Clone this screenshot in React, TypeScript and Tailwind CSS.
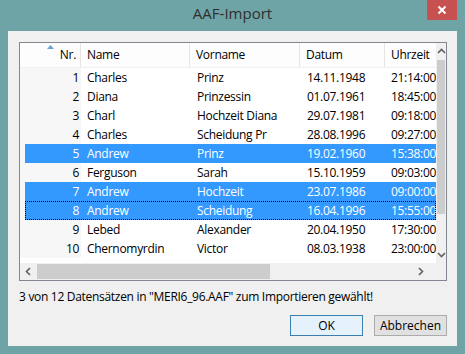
import React from "react";

type Row = { nr: number; name: string; vorname: string; datum: string; zeit: string; sel?: boolean; focus?: boolean };

const rows: Row[] = [
  { nr: 1, name: "Charles", vorname: "Prinz", datum: "14.11.1948", zeit: "21:14:00" },
  { nr: 2, name: "Diana", vorname: "Prinzessin", datum: "01.07.1961", zeit: "18:45:00" },
  { nr: 3, name: "Charl", vorname: "Hochzeit Diana", datum: "29.07.1981", zeit: "09:18:00" },
  { nr: 4, name: "Charles", vorname: "Scheidung Pr", datum: "28.08.1996", zeit: "09:27:00" },
  { nr: 5, name: "Andrew", vorname: "Prinz", datum: "19.02.1960", zeit: "15:38:00", sel: true },
  { nr: 6, name: "Ferguson", vorname: "Sarah", datum: "15.10.1959", zeit: "09:03:00" },
  { nr: 7, name: "Andrew", vorname: "Hochzeit", datum: "23.07.1986", zeit: "09:00:00", sel: true },
  { nr: 8, name: "Andrew", vorname: "Scheidung", datum: "16.04.1996", zeit: "15:55:00", sel: true, focus: true },
  { nr: 9, name: "Lebed", vorname: "Alexander", datum: "20.04.1950", zeit: "17:30:00" },
  { nr: 10, name: "Chernomyrdin", vorname: "Victor", datum: "08.03.1938", zeit: "23:00:00" },
];

const Chevron = ({ dir }: { dir: "up" | "down" | "left" | "right" }) => {
  const d = {
    up: "M1 6 L4.5 2.5 L8 6",
    down: "M1 3 L4.5 6.5 L8 3",
    left: "M6 1 L2.5 4.5 L6 8",
    right: "M3 1 L6.5 4.5 L3 8",
  }[dir];
  return (
    <svg width="9" height="9" viewBox="0 0 9 9">
      <path d={d} fill="none" stroke="#606060" strokeWidth="1.6" />
    </svg>
  );
};

export default function App() {
  return (
    <div
      className="w-[465px] h-[354px] bg-[#6fa4a7] flex flex-col overflow-hidden text-[12px] text-black"
      style={{ fontFamily: '"Open Sans", "Noto Sans", sans-serif' }}
    >
      {/* title bar */}
      <div className="h-[31px] flex items-start relative shrink-0">
        <div className="flex-1 text-center text-[15px] text-[#2e2e2e] pt-[2px]">AAF-Import</div>
        <div className="absolute right-[8px] top-0 w-[30px] h-[20px] bg-[#c75050] flex items-center justify-center">
          <svg width="10" height="10" viewBox="0 0 10 10">
            <path d="M1.5 1.5 L8.5 8.5 M8.5 1.5 L1.5 8.5" stroke="#fff" strokeWidth="2" />
          </svg>
        </div>
      </div>

      {/* client */}
      <div className="mx-[8px] mb-[8px] flex-1 bg-[#f0f0f0] flex flex-col pl-[11px] pr-[10px] pt-[11px] tracking-[-0.3px]">
        {/* list view */}
        <div className="h-[239px] border border-[#828790] bg-white flex flex-col">
          <div className="flex flex-1 min-h-0">
            <div className="flex-1 flex flex-col">
              {/* header */}
              <div className="h-[25px] flex items-stretch border-b border-[#f0f0f0] bg-[#fdfdfd]">
                <div className="w-[61px] border-r border-[#e5e5e5] relative flex items-center justify-end pr-[4px]">
                  <svg className="absolute left-[27px] top-[2px]" width="7" height="4" viewBox="0 0 7 4">
                    <path d="M0 4 L3.5 0 L7 4 Z" fill="#6e9fd0" />
                  </svg>
                  Nr.
                </div>
                <div className="w-[109px] border-r border-[#e5e5e5] flex items-center pl-[6px]">Name</div>
                <div className="w-[110px] border-r border-[#e5e5e5] flex items-center pl-[6px]">Vorname</div>
                <div className="w-[85px] border-r border-[#e5e5e5] flex items-center pl-[6px]">Datum</div>
                <div className="flex-1 flex items-center pl-[6px] overflow-hidden whitespace-nowrap">Uhrzeit</div>
              </div>
              {/* rows */}
              <div className="flex-1 flex flex-col">
                {rows.map((r) => (
                  <div key={r.nr} className="h-[19px] flex">
                    <div className="w-[5px] bg-[#f7f7f7]" />
                    <div
                      className={`flex-1 flex items-center whitespace-nowrap overflow-hidden ${
                        r.sel ? "bg-[#3399ff] text-white" : ""
                      } ${r.focus ? "outline outline-1 outline-dotted outline-black -outline-offset-1" : ""}`}
                    >
                      <div className={`w-[56px] h-full flex items-center justify-end pr-[2px] ${r.sel ? "" : "bg-[#f7f7f7]"}`}>
                        {r.nr}
                      </div>
                      <div className="w-[109px] pl-[6px]">{r.name}</div>
                      <div className="w-[110px] pl-[7px]">{r.vorname}</div>
                      <div className="w-[85px] pl-[7px]">{r.datum}</div>
                      <div className="flex-1 pl-[6px] overflow-hidden">{r.zeit}</div>
                    </div>
                  </div>
                ))}
              </div>
            </div>
            {/* vertical scrollbar */}
            <div className="w-[17px] bg-[#f0f0f0] flex flex-col items-center">
              <div className="h-[17px] flex items-center justify-center">
                <Chevron dir="up" />
              </div>
              <div className="flex-1 w-full px-[1px]">
                <div className="h-[154px] bg-[#cdcdcd]" />
              </div>
              <div className="h-[17px] flex items-center justify-center">
                <Chevron dir="down" />
              </div>
            </div>
          </div>
          {/* horizontal scrollbar */}
          <div className="h-[17px] flex bg-[#f0f0f0]">
            <div className="w-[17px] flex items-center justify-center">
              <Chevron dir="left" />
            </div>
            <div className="flex-1 py-[1px]">
              <div className="w-[233px] h-full bg-[#cdcdcd]" />
            </div>
            <div className="w-[17px] flex items-center justify-center">
              <Chevron dir="right" />
            </div>
            <div className="w-[17px]" />
          </div>
        </div>

        <div className="mt-[8px] leading-[16px]">
          3 von 12 Datensätzen in "MERI6_96.AAF" zum Importieren gewählt!
        </div>

        <div className="mt-[10px] flex justify-end gap-[11px] tracking-normal">
          <button className="w-[73px] h-[21px] border border-[#3c7fb1] bg-[#e5f1fb] leading-none">OK</button>
          <button className="w-[73px] h-[21px] border border-[#acacac] bg-[#e1e1e1] leading-none">Abbrechen</button>
        </div>
      </div>
    </div>
  );
}
